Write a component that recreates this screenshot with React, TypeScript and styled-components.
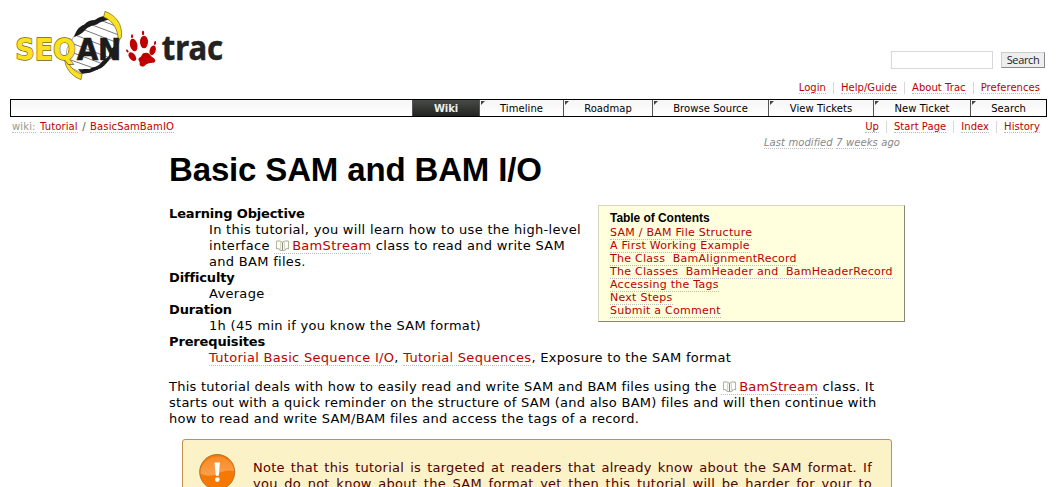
import React from 'react';
import styled, { createGlobalStyle } from 'styled-components';

const sans = '"DejaVu Sans", Verdana, sans-serif';
const arial = '"Liberation Sans", Arial, sans-serif';

const GlobalStyle = createGlobalStyle`
  * { box-sizing: border-box; }
  html, body { margin: 0; padding: 0; }
  body {
    background: #fff;
    color: #000;
    font: 13px/16px ${sans};
    letter-spacing: 0.26px;
    overflow: hidden;
  }
`;

const Page = styled.div`
  width: 1057px;
  height: 487px;
  overflow: hidden;
  padding: 0 10px;
`;

const Header = styled.header`
  display: flex;
  justify-content: space-between;
  height: 99px;
`;

const Logo = styled.svg`
  display: block;
  width: 240px;
  height: 90px;
  margin-left: -10px;
`;

const HeaderTools = styled.div`
  display: flex;
  flex-direction: column;
  align-items: flex-end;
  padding-top: 51px;
`;

const SearchForm = styled.form`
  display: flex;
  align-items: center;
  gap: 8px;
  height: 18px;
  margin: 0 2px 13px 0;
`;

const SearchInput = styled.input`
  width: 102px;
  height: 18px;
  padding: 0 3px;
  border: 1px solid #d7d7d7;
  background: #fff;
`;

const SearchButton = styled.button`
  width: 44px;
  height: 16px;
  padding: 0;
  border: 1px solid #ccc;
  border-right-color: #888;
  border-bottom-color: #888;
  background: #eee;
  color: #222;
  font: 11px/12px "Open Sans", sans-serif;
  letter-spacing: -0.35px;
`;

const Link = styled.a`
  color: #b00;
  text-decoration: none;
  border-bottom: 1px dotted #bbb;
`;

const MenuList = styled.ul`
  display: flex;
  margin: 0;
  padding: 0;
  list-style: none;
  font-size: 10px;
  line-height: 12px;
  letter-spacing: 0.05px;
`;

const MenuItem = styled.li<{ $first?: boolean }>`
  height: 12px;
  padding: 0 7px;
  border-left: ${(p) => (p.$first ? 'none' : '1px solid #d7d7d7')};
  white-space: nowrap;
`;

const MainNav = styled.nav`
  display: flex;
  justify-content: flex-end;
  height: 18px;
  border: 1px solid #000;
  background: linear-gradient(#f6f6f6, #fff);
  font-size: 10px;
  line-height: 17px;
  letter-spacing: 0.06px;
`;

const Tab = styled.a<{ $width: number; $active?: boolean }>`
  position: relative;
  width: ${(p) => p.$width}px;
  height: 16px;
  border-left: 1px solid #555;
  text-align: center;
  white-space: nowrap;
  ${(p) =>
    p.$active &&
    `
    background: linear-gradient(#484a47, #22241f);
    color: #eee;
    font-weight: bold;
    letter-spacing: -0.1px;
  `}
`;

const TabCorner = styled.svg`
  position: absolute;
  top: 1px;
  left: 1px;
  width: 4px;
  height: 4px;
`;

const ContextBar = styled.div`
  display: flex;
  justify-content: space-between;
  height: 19px;
  padding-top: 4px;
`;

const Breadcrumb = styled.div`
  padding-left: 2px;
  color: #555;
  font-size: 10px;
  line-height: 12px;
  letter-spacing: 0.13px;
  word-spacing: 1.1px;
`;

const Prefix = styled(Link)`
  color: #999988;
`;

const Modified = styled.div`
  height: 14px;
  padding-right: 147px;
  text-align: right;
  color: #888;
  font-size: 10px;
  line-height: 13px;
  font-style: italic;
  letter-spacing: 0.04px;
  word-spacing: 0.3px;
`;

const QuietLink = styled(Link)`
  color: #888;
`;

const Content = styled.main`
  width: 736px;
  margin-left: 159px;
`;

const Title = styled.h1`
  height: 55px;
  margin: 0;
  font: bold 33px/40px ${arial};
  letter-spacing: -0.15px;
`;

const Toc = styled.aside`
  float: right;
  width: 307px;
  height: 117px;
  padding: 6px 11px;
  border: 1px solid #d7d7c0;
  border-right-color: #888878;
  border-bottom-color: #888878;
  background: #ffffdd;
  font-size: 11px;
  line-height: 13px;
  white-space: pre;
`;

const TocTitle = styled.h4`
  margin: 0 0 1px;
  font: bold 12px/13px ${arial};
  letter-spacing: -0.05px;
`;

const TocItem = styled.div`
  height: 13px;
`;

const Facts = styled.dl`
  margin: 0;
  padding-top: 1px;
  white-space: nowrap;
`;

const Term = styled.dt`
  height: 16px;
  font-weight: bold;
  letter-spacing: -0.15px;
`;

const Detail = styled.dd`
  margin: 0 0 0 40px;
  letter-spacing: 0.3px;
`;

const Paragraph = styled.p`
  margin: 13px 0 12px;
  white-space: nowrap;
`;

const BookIcon = styled.svg`
  width: 15px;
  height: 12px;
  margin: 0 2px 0 1px;
  vertical-align: -2px;
`;

const NoteBox = styled.section`
  display: flex;
  width: 710px;
  height: 80px;
  margin: 0 0 0 13px;
  padding: 14px 19px 0 16px;
  border: 1px solid #c09050;
  border-radius: 3px;
  background: #fcf2c8;
  color: #500000;
`;

const AlertIcon = styled.svg`
  flex: none;
  width: 38px;
  height: 40px;
  margin-right: 16px;
`;

const NoteText = styled.div`
  flex: 1;
  padding-top: 6px;
`;

const NoteLine = styled.div`
  height: 16px;
  text-align: justify;
  text-align-last: justify;
  white-space: nowrap;
`;

const Book = () => (
  <BookIcon viewBox="0 0 15 12">
    <path
      d="M7.5 2.8C6.5 .8 3.5 .4 1.5 1.3V8.6C3 8.2 4.6 8.8 5.4 10.5H9.6C10.4 8.8 12 8.2 13.5 8.6V1.3C11.5 .4 8.5 .8 7.5 2.8Z"
      fill="#fff"
      stroke="#b4b6a0"
      strokeWidth="1.1"
    />
    <path d="M7.5 2.5V10.5" fill="none" stroke="#8e907a" strokeWidth="1.1" />
    <path d="M5.6 2.2V9.4M9.4 2.2V9.4" fill="none" stroke="#c4c6b2" strokeWidth="0.8" />
  </BookIcon>
);

const BamStreamLink = () => (
  <Link>
    <Book />
    BamStream
  </Link>
);

const SiteLogo = () => (
  <Logo viewBox="0 0 720 270">
    <path
      d="M220 112L238 84L275 64L322 48L352 66L363 108L350 148L336 172L302 204L248 220L214 204L197 178L201 146Z"
      fill="#fff"
      stroke="#777"
      strokeWidth="2"
    />
    <g stroke="#333" strokeWidth="2">
      <path d="M300 60L352 80M274 74L359 106M246 87L357 130M228 106L348 152M216 130L335 176M205 153L314 194M201 176L294 209" />
    </g>
    <path
      d="M222 112C228 92 236 80 252 74C262 64 272 60 285 60C296 50 308 47 324 48L338 58C322 58 310 64 298 68C290 76 278 74 270 80C258 82 252 98 238 104Z"
      fill="#1c1c1c"
    />
    <path
      d="M356 128C350 144 344 160 332 172C322 190 308 204 294 208C276 218 262 221 246 221L234 207C250 209 258 206 268 208C278 200 290 202 300 192C308 180 318 178 326 168L334 146Z"
      fill="#1c1c1c"
    />
    <path
      d="M315 34C348 46 369 74 364 112L354 123C356 92 340 62 311 51Z"
      fill="#fbe122"
      stroke="#6b5d12"
      strokeWidth="2"
    />
    <path
      d="M200 170C204 196 219 214 246 222L243 239C215 229 193 203 194 174Z"
      fill="#fbe122"
      stroke="#6b5d12"
      strokeWidth="2"
    />
    <g fontFamily='"DejaVu Sans", sans-serif' fontWeight="bold" letterSpacing="0">
      <text
        x="46"
        y="181"
        fontSize="88"
        textLength="182"
        lengthAdjust="spacingAndGlyphs"
        fill="#fbe122"
        stroke="#6b5d12"
        strokeWidth="4"
        paintOrder="stroke"
      >
        SEQ
      </text>
      <text
        x="230"
        y="181"
        fontSize="88"
        textLength="134"
        lengthAdjust="spacingAndGlyphs"
        fill="#1c1c1c"
        stroke="#1c1c1c"
        strokeWidth="2"
      >
        AN
      </text>
    </g>
    <text
      x="485"
      y="179"
      fontFamily='"Noto Sans", sans-serif'
      fontWeight="bold"
      fontSize="102"
      letterSpacing="0"
      textLength="184"
      lengthAdjust="spacingAndGlyphs"
      fill="#222"
      stroke="#222"
      strokeWidth="1.5"
    >
      trac
    </text>
    <g fill="#c00000">
      <path d="M430 160C443 154 449 162 456 171C467 176 470 187 459 188C447 189 441 190 434 197C426 203 417 198 419 189C421 184 411 180 418 173C426 171 424 164 430 160Z" />
      <ellipse cx="397" cy="170" rx="9" ry="15" transform="rotate(-38 397 170)" />
      <ellipse cx="401" cy="135" rx="11" ry="19" transform="rotate(-14 401 135)" />
      <ellipse cx="432" cy="126" rx="12" ry="19" />
      <ellipse cx="458" cy="151" rx="9" ry="15" transform="rotate(18 458 151)" />
      <ellipse cx="382" cy="153" rx="3" ry="5" transform="rotate(-30 382 153)" />
      <ellipse cx="396" cy="109" rx="3" ry="6" />
      <ellipse cx="429" cy="99" rx="3.5" ry="7" />
      <ellipse cx="465" cy="129" rx="3" ry="6" transform="rotate(10 465 129)" />
    </g>
  </Logo>
);

const Alert = () => (
  <AlertIcon viewBox="0 0 38 40">
    <defs>
      <linearGradient id="alertShine" x1="0" y1="0" x2="0" y2="1">
        <stop offset="0" stopColor="#f78a28" />
        <stop offset="1" stopColor="#fba04a" />
      </linearGradient>
    </defs>
    <ellipse cx="19" cy="36" rx="14" ry="2.5" fill="#d8c898" />
    <circle cx="18.2" cy="18" r="17.5" fill="#f57900" stroke="#b8702c" strokeWidth="1" />
    <path d="M1.4 19A17 17 0 0 1 35.2 17C29 15.5 24 17 18 20C12 22.5 6 22 1.8 19.5Z" fill="url(#alertShine)" />
    <path d="M15.5 8.5H20.9L19.8 21.8H16.8Z" fill="#fff" />
    <circle cx="18.3" cy="25.6" r="2.3" fill="#fff" />
  </AlertIcon>
);

const tabs = [
  { label: 'Wiki', width: 67, active: true },
  { label: 'Timeline', width: 84 },
  { label: 'Roadmap', width: 89 },
  { label: 'Browse Source', width: 116 },
  { label: 'View Tickets', width: 105 },
  { label: 'New Ticket', width: 97 },
  { label: 'Search', width: 76 },
];

const tocEntries = [
  'SAM / BAM File Structure',
  'A First Working Example',
  'The Class  BamAlignmentRecord',
  'The Classes  BamHeader and  BamHeaderRecord',
  'Accessing the Tags',
  'Next Steps',
  'Submit a Comment',
];

const LinkMenu = ({ items }: { items: string[] }) => (
  <MenuList>
    {items.map((item, i) => (
      <MenuItem key={item} $first={i === 0}>
        <Link>{item}</Link>
      </MenuItem>
    ))}
  </MenuList>
);

export default function App() {
  return (
    <Page>
      <GlobalStyle />
      <Header>
        <SiteLogo />
        <HeaderTools>
          <SearchForm>
            <SearchInput aria-label="Search" />
            <SearchButton type="button">Search</SearchButton>
          </SearchForm>
          <LinkMenu items={['Login', 'Help/Guide', 'About Trac', 'Preferences']} />
        </HeaderTools>
      </Header>
      <MainNav>
        {tabs.map((tab) => (
          <Tab key={tab.label} $width={tab.width} $active={tab.active}>
            {!tab.active && (
              <TabCorner viewBox="0 0 4 4">
                <path d="M0 0H4L0 4Z" fill="#444" />
              </TabCorner>
            )}
            {tab.label}
          </Tab>
        ))}
      </MainNav>
      <ContextBar>
        <Breadcrumb>
          <Prefix>wiki:</Prefix> <Link>Tutorial</Link> / <Link>BasicSamBamIO</Link>
        </Breadcrumb>
        <LinkMenu items={['Up', 'Start Page', 'Index', 'History']} />
      </ContextBar>
      <Modified>
        <QuietLink>Last modified</QuietLink> <QuietLink>7 weeks</QuietLink> ago
      </Modified>
      <Content>
        <Title>Basic SAM and BAM I/O</Title>
        <Toc>
          <TocTitle>Table of Contents</TocTitle>
          {tocEntries.map((entry) => (
            <TocItem key={entry}>
              <Link>{entry}</Link>
            </TocItem>
          ))}
        </Toc>
        <Facts>
          <Term>Learning Objective</Term>
          <Detail>
            In this tutorial, you will learn how to use the high-level
            <br />
            interface <BamStreamLink /> class to read and write SAM
            <br />
            and BAM files.
          </Detail>
          <Term>Difficulty</Term>
          <Detail>Average</Detail>
          <Term>Duration</Term>
          <Detail>1h (45 min if you know the SAM format)</Detail>
          <Term>Prerequisites</Term>
          <Detail>
            <Link>Tutorial Basic Sequence I/O</Link>, <Link>Tutorial Sequences</Link>, Exposure to the SAM format
          </Detail>
        </Facts>
        <Paragraph>
          This tutorial deals with how to easily read and write SAM and BAM files using the <BamStreamLink /> class. It
          <br />
          starts out with a quick reminder on the structure of SAM (and also BAM) files and will then continue with
          <br />
          how to read and write SAM/BAM files and access the tags of a record.
        </Paragraph>
        <NoteBox>
          <Alert />
          <NoteText>
            <NoteLine>Note that this tutorial is targeted at readers that already know about the SAM format. If</NoteLine>
            <NoteLine>you do not know about the SAM format yet then this tutorial will be harder for your to</NoteLine>
          </NoteText>
        </NoteBox>
      </Content>
    </Page>
  );
}
